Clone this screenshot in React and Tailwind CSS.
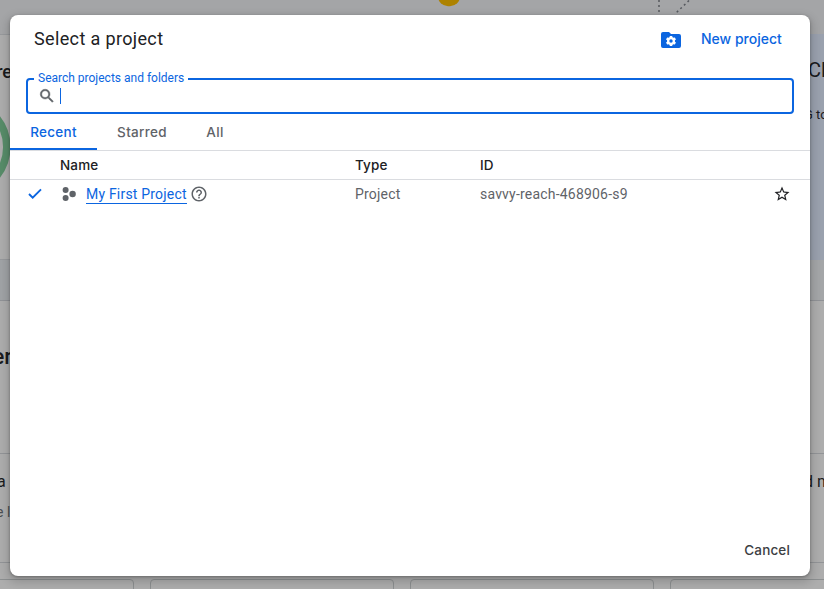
import React from "react";

function Backdrop() {
  return (
    <div className="flex h-[589px] w-[824px] flex-col bg-[#adadad] font-['Roboto',sans-serif] text-[#1a1b1d]">
      <div className="flex h-[34px] shrink-0 bg-[#a4a5a7]">
        <svg width="824" height="34" viewBox="0 0 824 34">
          <rect x="438" y="-15" width="22" height="21.300" rx="10" fill="#ad8200" />
          <path d="M659 0V34" stroke="#55585e" strokeWidth="1.500" strokeDasharray="2 3" />
          <path d="M689 0.500L676 13" stroke="#55585e" strokeWidth="1.500" strokeDasharray="2 3" />
        </svg>
      </div>
      <div className="flex h-[226px] shrink-0 justify-between">
        <div className="flex h-full w-[400px] flex-col border-y border-[#97999c]">
          <div className="flex h-[72px] w-[12px] items-center justify-end text-[18px] font-medium">
            <span>re</span>
          </div>
          <svg className="block" width="12" height="84" viewBox="0 0 12 84">
            <circle cx="-39" cy="40" r="45.800" fill="none" stroke="#578c69" strokeWidth="7.500" />
          </svg>
        </div>
        <div className="flex w-[400px] flex-col items-end bg-[#9aa1ae]">
          <div className="flex h-[72px] w-[16px] items-center text-[20px]">Cl</div>
          <div className="flex h-[18px] w-[20px] items-center whitespace-nowrap text-[13px]">
            G to
          </div>
        </div>
      </div>
      <div className="flex h-[41px] shrink-0 border-b border-[#909296] bg-[#a4a6a8]">
        <div className="w-[400px] bg-[#a0a3a6]" />
      </div>
      <div className="h-[153px] shrink-0 border-b border-[#929497]">
        <div className="flex h-[110px] w-[12px] items-center justify-end text-[22px] font-medium">
          <span>er</span>
        </div>
      </div>
      <div className="flex h-[109px] shrink-0 justify-between border-b border-[#929497] pt-[16px]">
        <div className="w-[16px]">
          <div className="-ml-[3px] text-[16px] leading-[24px]">a</div>
          <div className="-ml-[4px] mt-[6px] whitespace-nowrap text-[14px] leading-[24px] text-[#4b4e51]">e l</div>
        </div>
        <div className="w-[20px] whitespace-nowrap text-[16px] leading-[24px]">d n</div>
      </div>
      <div className="flex grow gap-4 overflow-hidden pt-[16px]">
        <div className="-ml-[110px] h-12 w-[244px] shrink-0 rounded border border-[#8c8f90]" />
        <div className="h-12 w-[244px] shrink-0 rounded border border-[#8c8f90]" />
        <div className="h-12 w-[244px] shrink-0 rounded border border-[#8c8f90]" />
        <div className="h-12 w-[244px] shrink-0 rounded border border-[#8c8f90]" />
      </div>
    </div>
  );
}

function FolderGearIcon() {
  return (
    <svg width="20" height="16" viewBox="0 0 20 16">
      <path d="M2 0h6l2 2h8a2 2 0 0 1 2 2v10a2 2 0 0 1-2 2H2a2 2 0 0 1-2-2V2a2 2 0 0 1 2-2z" fill="#0b65e0" />
      <g fill="#fff">
        <circle cx="10" cy="9" r="4" />
        <rect x="8.700" y="3.900" width="2.600" height="10.200" rx=".5" />
        <rect x="8.700" y="3.900" width="2.600" height="10.200" rx=".5" transform="rotate(60 10 9)" />
        <rect x="8.700" y="3.900" width="2.600" height="10.200" rx=".5" transform="rotate(120 10 9)" />
      </g>
      <circle cx="10" cy="9" r="1.700" fill="#0b65e0" />
    </svg>
  );
}

function SearchIcon() {
  return (
    <svg width="18" height="18" viewBox="0 0 24 24" fill="#5f6368">
      <path d="M15.500 14h-.79l-.28-.27A6.470 6.470 0 0 0 16 9.500 6.500 6.500 0 1 0 9.500 16c1.610 0 3.090-.59 4.230-1.570l.27.28v.79l5 4.990L20.490 19l-4.990-5zm-6 0C7.010 14 5 11.990 5 9.500S7.010 5 9.500 5 14 7.010 14 9.500 11.990 14 9.500 14z" stroke="#5f6368" strokeWidth=".6" />
    </svg>
  );
}

function ProjectIcon() {
  return (
    <svg width="14" height="14" viewBox="0 0 14 14" fill="#5f6368">
      <circle cx="3.600" cy="3" r="3" />
      <circle cx="10.600" cy="7" r="3.200" />
      <circle cx="3.600" cy="11" r="3" />
    </svg>
  );
}

function HelpIcon() {
  return (
    <svg width="18" height="18" viewBox="0 0 24 24" fill="#5f6368">
      <path d="M11 18h2v-2h-2v2zm1-16C6.480 2 2 6.480 2 12s4.480 10 10 10 10-4.480 10-10S17.520 2 12 2zm0 18c-4.410 0-8-3.590-8-8s3.590-8 8-8 8 3.590 8 8-3.590 8-8 8zm0-14c-2.210 0-4 1.790-4 4h2c0-1.100.9-2 2-2s2 .9 2 2c0 2-3 1.750-3 5h2c0-2.250 3-2.500 3-5 0-2.210-1.790-4-4-4z" />
    </svg>
  );
}

function StarIcon() {
  return (
    <svg width="18" height="18" viewBox="0 0 24 24" fill="#202124">
      <path d="M22 9.240l-7.190-.62L12 2 9.190 8.630 2 9.240l5.460 4.730L5.820 21 12 17.270 18.180 21l-1.630-7.030L22 9.240zM12 15.400l-3.760 2.270 1-4.280-3.320-2.880 4.380-.38L12 6.100l1.710 4.040 4.380.38-3.320 2.880 1 4.280L12 15.400z" />
    </svg>
  );
}

function Dialog() {
  return (
    <div className="absolute left-[10px] top-[15px] flex h-[561px] w-[800px] flex-col rounded-lg bg-white font-['Roboto',sans-serif] text-[14px] shadow-[0_1px_3px_rgba(0,0,0,0.3),0_4px_8px_3px_rgba(0,0,0,0.15)]">
      <header className="flex h-[63px] items-start pl-6 pr-7 pt-[12px]">
        <h1 className="grow text-[18px] leading-6 tracking-[0.36px] text-[#202124]">Select a project</h1>
        <div className="mr-5 mt-[5px]">
          <FolderGearIcon />
        </div>
        <button className="w-[81px] whitespace-nowrap text-left font-['Inter',sans-serif] font-medium leading-6 text-[#0b65e0]">New project</button>
      </header>

      <div className="relative mx-4 flex h-[36px] items-center rounded border-2 border-[#0b65e0] pl-[10px]">
        <span className="absolute -top-[10px] left-[6px] bg-white px-1 text-[12px] leading-4 text-[#0b65e0]">
          Search projects and folders
        </span>
        <SearchIcon />
        <span className="ml-[4px] h-4 w-px bg-[#0b65e0]" />
      </div>

      <nav className="flex h-[37px] shrink-0 border-b border-[#dadce0] font-['Inter',sans-serif] text-[13.5px] font-medium tracking-[0.3px] text-[#5f6368]">
        <div className="flex h-[36px] w-[87px] items-center justify-center border-b-2 border-[#0b65e0] pt-[2px] text-[#0b65e0]">Recent</div>
        <div className="flex w-[90px] items-center justify-center">Starred</div>
        <div className="flex w-[56px] items-center justify-center">All</div>
      </nav>

      <div className="grid h-[29px] shrink-0 grid-cols-[50px_295px_125px_1fr] items-center border-b border-[#dadce0] font-['Inter',sans-serif] text-[13.5px] font-medium tracking-[0.15px] text-[#202124]">
        <span />
        <span>Name</span>
        <span>Type</span>
        <span>ID</span>
      </div>
      <div className="grid h-[29px] shrink-0 grid-cols-[50px_295px_125px_1fr_37px] items-center tracking-[0.2px] text-[#5f6368]">
        <svg className="-mt-[2px] ml-[18px]" width="14" height="12" viewBox="0 0 14 12">
          <path d="M1 6l3.700 3.700L13 1.400" fill="none" stroke="#0b65e0" strokeWidth="1.900" />
        </svg>
        <span className="-mt-[2px] flex items-center pl-[2px]">
          <ProjectIcon />
          <a className="ml-[10px] mr-[3px] mt-[2px] border-b border-[#0b65e0] leading-[18px] text-[#0b65e0]">My First Project</a>
          <HelpIcon />
        </span>
        <span>Project</span>
        <span>savvy-reach-468906-s9</span>
        <span className="-mt-[2px]">
          <StarIcon />
        </span>
      </div>

      <footer className="mt-auto flex justify-end pb-[14px] pr-5">
        <button className="font-['Inter',sans-serif] text-[13.5px] font-medium leading-6 tracking-[0.15px] text-[#3c4043]">Cancel</button>
      </footer>
    </div>
  );
}

export default function App() {
  return (
    <main className="relative h-[589px] w-[824px] overflow-hidden">
      <Backdrop />
      <Dialog />
    </main>
  );
}
